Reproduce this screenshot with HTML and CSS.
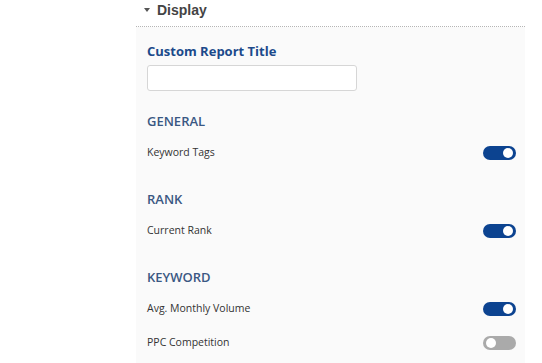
FILE: index.html
```html
<!DOCTYPE html>
<html lang="en-US">
<head>
	<title>Report display settings</title>
	<meta charset="UTF-8">
	<link rel="stylesheet" href="styles.css">
</head>
<body>

<div class="settings">
	<div class="section-head">
		<span class="caret"></span>
		<span class="section-name">Display</span>
	</div>

	<div class="panel">
		<label class="field-label" for="report-title">Custom Report Title</label>
		<input class="text-input" id="report-title" type="text">

		<div class="group group-first">
			<h3 class="group-title">GENERAL</h3>
			<div class="option">
				<span class="option-name">Keyword Tags</span>
				<span class="toggle on"></span>
			</div>
		</div>

		<div class="group">
			<h3 class="group-title">RANK</h3>
			<div class="option">
				<span class="option-name">Current Rank</span>
				<span class="toggle on"></span>
			</div>
		</div>

		<div class="group">
			<h3 class="group-title">KEYWORD</h3>
			<div class="option">
				<span class="option-name">Avg. Monthly Volume</span>
				<span class="toggle on"></span>
			</div>
			<div class="option">
				<span class="option-name">PPC Competition</span>
				<span class="toggle"></span>
			</div>
		</div>
	</div>
</div>

</body>
</html>
```

FILE: styles.css
```css
body {
	margin: 0;
	background: #fff;
	font-family: "Open Sans", "Liberation Sans", sans-serif;
}

.settings {
	margin-left: 136px;
	width: 389px;
}

.section-head {
	display: flex;
	align-items: center;
	padding-left: 8px;
	border-bottom: 1px dotted #b5b5b5;
	box-sizing: border-box;
	height: 27px;
}

.caret {
	width: 0;
	height: 0;
	border-left: 3px solid transparent;
	border-right: 3px solid transparent;
	border-top: 4px solid #555;
	margin-right: 7px;
	margin-top: -6px;
}

.section-name {
	font-family: "Liberation Sans", Arial, sans-serif;
	font-weight: bold;
	font-size: 14px;
	color: #444;
	margin-top: -6px;
}

.panel {
	background: #fafafa;
	padding: 15px 9px 12px 11px;
	height: 336px;
	box-sizing: border-box;
}

.field-label {
	display: block;
	font-size: 13px;
	font-weight: bold;
	line-height: 18px;
	color: #1c4a8b;
}

.text-input {
	display: block;
	margin-top: 5px;
	width: 210px;
	height: 26px;
	box-sizing: border-box;
	border: 1px solid #d6d6d6;
	border-radius: 3px;
	background: #fff;
	padding: 0 6px;
}

.group {
	margin-top: 25px;
	display: flex;
	flex-direction: column;
	gap: 10px;
}

.group-first { margin-top: 21px; }

.group-title {
	margin: 0 0 1px;
	font-size: 13px;
	font-weight: 600;
	line-height: 18px;
	color: #3a5883;
}

.option {
	height: 24px;
	display: flex;
	align-items: center;
	justify-content: space-between;
}

.option-name {
	font-size: 10.5px;
	color: #333;
	margin-top: -3px;
}

.toggle {
	position: relative;
	width: 33px;
	height: 14px;
	border-radius: 7px;
	background: #aaa;
}

.toggle::after {
	content: "";
	position: absolute;
	top: 2px;
	left: 3px;
	width: 10px;
	height: 10px;
	border-radius: 50%;
	background: #fff;
}

.toggle.on { background: #0c4390; }

.toggle.on::after {
	left: auto;
	right: 3px;
}
```
